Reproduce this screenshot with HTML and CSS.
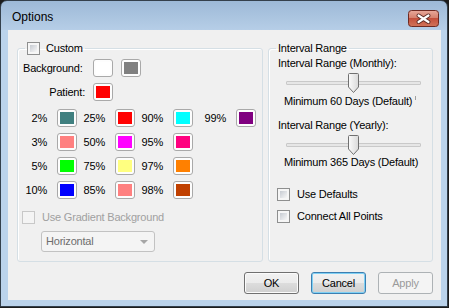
FILE: index.html
```html
<!DOCTYPE html>
<html lang="en">
<head>
    <meta charset="UTF-8">
    <meta name="viewport" content="width=device-width, initial-scale=1.0">
    <title>Options</title>
    <link rel="stylesheet" href="styles.css">
</head>
<body>
    <div class="window">
        <div class="titlebar">
            <span class="title">Options</span>
            <span class="close-btn">
                <svg width="31" height="17" viewBox="0 0 31 17">
                    <defs>
                        <linearGradient id="closeGrad" x1="0" y1="0" x2="0" y2="1">
                            <stop offset="0" stop-color="#e9a99b"/>
                            <stop offset="0.45" stop-color="#d6826f"/>
                            <stop offset="0.5" stop-color="#c4503c"/>
                            <stop offset="1" stop-color="#d1745a"/>
                        </linearGradient>
                    </defs>
                    <rect x="0.5" y="0.5" width="30" height="16" rx="3" fill="url(#closeGrad)" stroke="#6e2a22"/>
                    <path d="M10.5 5.5 L20.5 12 M20.5 5.5 L10.5 12" stroke="#5b2a24" stroke-width="4" stroke-linecap="round"/>
                    <path d="M10.5 5.5 L20.5 12 M20.5 5.5 L10.5 12" stroke="#ffffff" stroke-width="2.2" stroke-linecap="round"/>
                </svg>
            </span>
        </div>

        <div class="client">
            <div class="groups">
                <!-- colours -->
                <fieldset class="group group-colors">
                    <legend><span class="checkbox"></span>Custom</legend>

                    <div class="color-row first">
                        <span class="row-label">Background:</span>
                        <span class="swatch"><span class="fill" style="background:#ffffff"></span></span>
                        <span class="swatch"><span class="fill" style="background:#808080"></span></span>
                    </div>
                    <div class="color-row">
                        <span class="row-label right">Patient:</span>
                        <span class="swatch"><span class="fill" style="background:#ff0000"></span></span>
                    </div>

                    <div class="pct-list">
                        <div class="pct-row">
                            <span class="pct">2%</span><span class="swatch"><span class="fill" style="background:#408080"></span></span>
                            <span class="pct">25%</span><span class="swatch"><span class="fill" style="background:#ff0000"></span></span>
                            <span class="pct">90%</span><span class="swatch"><span class="fill" style="background:#00ffff"></span></span>
                            <span class="pct">99%</span><span class="swatch"><span class="fill" style="background:#800080"></span></span>
                        </div>
                        <div class="pct-row">
                            <span class="pct">3%</span><span class="swatch"><span class="fill" style="background:#ff8080"></span></span>
                            <span class="pct">50%</span><span class="swatch"><span class="fill" style="background:#ff00ff"></span></span>
                            <span class="pct">95%</span><span class="swatch"><span class="fill" style="background:#ff0080"></span></span>
                        </div>
                        <div class="pct-row">
                            <span class="pct">5%</span><span class="swatch"><span class="fill" style="background:#00ff00"></span></span>
                            <span class="pct">75%</span><span class="swatch"><span class="fill" style="background:#ffff80"></span></span>
                            <span class="pct">97%</span><span class="swatch"><span class="fill" style="background:#ff8000"></span></span>
                        </div>
                        <div class="pct-row">
                            <span class="pct">10%</span><span class="swatch"><span class="fill" style="background:#0000ff"></span></span>
                            <span class="pct">85%</span><span class="swatch"><span class="fill" style="background:#ff8080"></span></span>
                            <span class="pct">98%</span><span class="swatch"><span class="fill" style="background:#c04000"></span></span>
                        </div>
                    </div>

                    <div class="check-row disabled gradient-row">
                        <span class="checkbox"></span>Use Gradient Background
                    </div>
                    <div class="select">
                        <span>Horizontal</span>
                        <span class="arrow"></span>
                    </div>
                </fieldset>

                <!-- interval range -->
                <fieldset class="group group-range">
                    <legend>Interval Range</legend>

                    <div class="field-label">Interval Range (Monthly):</div>
                    <div class="slider">
                        <span class="track"></span>
                        <span class="thumb">
                            <svg width="11" height="20" viewBox="0 0 11 20">
                                <defs>
                                    <linearGradient id="thumbGrad" x1="0" y1="0" x2="1" y2="0">
                                        <stop offset="0" stop-color="#fbfbfb"/>
                                        <stop offset="1" stop-color="#d9d9d9"/>
                                    </linearGradient>
                                </defs>
                                <path d="M1.5 0.5 H9.5 Q10.5 0.5 10.5 1.5 V14 L5.5 19.5 L0.5 14 V1.5 Q0.5 0.5 1.5 0.5 Z" fill="url(#thumbGrad)" stroke="#707070"/>
                            </svg>
                        </span>
                        <span class="tick"></span>
                    </div>
                    <div class="slider-value">Minimum 60 Days (Default)</div>

                    <div class="field-label second">Interval Range (Yearly):</div>
                    <div class="slider">
                        <span class="track"></span>
                        <span class="thumb">
                            <svg width="11" height="20" viewBox="0 0 11 20">
                                <path d="M1.5 0.5 H9.5 Q10.5 0.5 10.5 1.5 V14 L5.5 19.5 L0.5 14 V1.5 Q0.5 0.5 1.5 0.5 Z" fill="url(#thumbGrad)" stroke="#707070"/>
                            </svg>
                        </span>
                    </div>
                    <div class="slider-value last">Minimum 365 Days (Default)</div>

                    <div class="check-row defaults-row">
                        <span class="checkbox"></span>Use Defaults
                    </div>
                    <div class="check-row connect-row">
                        <span class="checkbox"></span>Connect All Points
                    </div>
                </fieldset>
            </div>

            <div class="buttons">
                <button class="btn">OK</button>
                <button class="btn btn-default">Cancel</button>
                <button class="btn" disabled>Apply</button>
            </div>
        </div>
    </div>
</body>
</html>
```

FILE: styles.css
```css
* {
    box-sizing: border-box;
}
body {
    margin: 0;
    background-color: #1c1c1c;
    font-family: "Liberation Sans", Arial, sans-serif;
    font-size: 11px;
    line-height: 13px;
    letter-spacing: -0.2px;
    color: #000;
}

/* window frame */
.window {
    width: 448px;
    height: 307px;
    border: 1px solid #34404c;
    border-radius: 7px 7px 0 0;
    background: linear-gradient(#9db9d7, #b6cee7 29px, #bbd3eb 29px);
    padding: 0 6px 6px 7px;
}
.titlebar {
    height: 29px;
    display: flex;
    justify-content: space-between;
    align-items: flex-start;
}
.title {
    font-size: 12px;
    line-height: 15px;
    letter-spacing: 0;
    margin: 9px 0 0 4px;
}
.close-btn {
    display: block;
    height: 17px;
    margin: 9px 2px 0 0;
}
.close-btn svg {
    display: block;
}
.client {
    width: 433px;
    height: 270px;
    background-color: #f0f0f0;
    padding: 12px 8px 0 9px;
}

/* group boxes */
.groups {
    display: flex;
    gap: 5px;
}
.group {
    margin: 0;
    min-width: 0;
    height: 220px;
    border: 1px solid #d5dfe5;
    border-radius: 3px;
    box-shadow: inset 1px 1px 0 #fff;
}
.group legend {
    padding: 0 2px;
    line-height: 13px;
}
.group-colors {
    width: 246px;
    padding: 0 5px;
}
.group-colors legend {
    display: flex;
    align-items: center;
    gap: 6px;
    margin-left: 2px;
}
.group-range {
    width: 165px;
    padding: 0 9px;
}
.group-range legend {
    margin-left: -2px;
}

/* checkboxes */
.checkbox {
    display: block;
    flex: none;
    width: 13px;
    height: 13px;
    border: 1px solid #8e8f8f;
    padding: 2px;
    background: linear-gradient(135deg, #c6cbd2, #f7f7f7) content-box, #f6f6f6;
}
.check-row {
    display: flex;
    align-items: center;
    gap: 7px;
}
.check-row.disabled {
    color: #a0a0a0;
}
.check-row.disabled .checkbox {
    border-color: #c8c8c8;
    background: #f4f4f4;
}

/* colour swatches */
.color-row {
    display: flex;
    align-items: center;
    gap: 8px;
    margin-top: 6px;
}
.color-row.first {
    margin-top: 4px;
}
.row-label {
    width: 62px;
}
.row-label.right {
    text-align: right;
}
.swatch {
    display: block;
    width: 20px;
    height: 18px;
    border: 1px solid #a9a9a9;
    border-radius: 3px;
    padding: 2px;
    background-color: #fdfdfd;
}
.swatch .fill {
    display: block;
    width: 100%;
    height: 100%;
}
.pct-list {
    display: flex;
    flex-direction: column;
    gap: 6px;
    margin-top: 8px;
}
.pct-row {
    display: grid;
    grid-template-columns: 34px 20px 38px 20px 38px 20px 43px 20px;
    align-items: center;
}
.pct {
    text-align: right;
    padding-right: 10px;
}
.gradient-row {
    margin: 12px 0 0 -1px;
}
.select {
    display: flex;
    justify-content: space-between;
    align-items: center;
    width: 114px;
    height: 21px;
    margin: 7px 0 0 18px;
    padding: 0 6px 0 4px;
    border: 1px solid #c2c2c2;
    border-radius: 3px;
    background-color: #f4f4f4;
    color: #6d6d6d;
}
.select .arrow {
    width: 0;
    height: 0;
    border-left: 4px solid transparent;
    border-right: 4px solid transparent;
    border-top: 4px solid #a6a6a6;
}

/* sliders */
.field-label {
    margin-top: 2px;
}
.field-label.second {
    margin-top: 11px;
}
.slider {
    position: relative;
    width: 135px;
    height: 20px;
    margin: 3px 0 0 8px;
}
.slider .track {
    position: absolute;
    left: 0;
    right: 0;
    top: 8px;
    height: 4px;
    border: 1px solid #c9c9c9;
    border-radius: 1px;
    background-color: #e6e6e6;
}
.slider .thumb {
    position: absolute;
    left: 62px;
    top: 0;
}
.slider .thumb svg {
    display: block;
}
.slider .tick {
    position: absolute;
    left: 129px;
    top: 23px;
    width: 1px;
    height: 4px;
    background-color: #a0a0a0;
}
.slider-value {
    margin-top: 2px;
    padding-left: 6px;
}
.slider-value.last {
    margin-top: 1px;
}
.defaults-row {
    margin: 19px 0 0 -1px;
}
.connect-row {
    margin: 9px 0 0 -1px;
}

/* dialog buttons */
.buttons {
    display: flex;
    justify-content: flex-end;
    gap: 12px;
    margin-top: 10px;
}
.btn {
    width: 55px;
    height: 22px;
    padding: 0;
    font-family: inherit;
    font-size: 11px;
    letter-spacing: -0.2px;
    color: #000;
    border: 1px solid #707070;
    border-radius: 3px;
    background: linear-gradient(#f2f2f2, #ebebeb 50%, #dddddd 50%, #cfcfcf);
    box-shadow: inset 0 0 0 1px #fbfbfb;
}
.btn-default {
    border-color: #3c7fb1;
    box-shadow: inset 0 0 0 1px #7fd0f4;
}
.btn:disabled {
    color: #9a9a9a;
    border-color: #adb2b5;
    background: #f4f4f4;
    box-shadow: none;
}
```
